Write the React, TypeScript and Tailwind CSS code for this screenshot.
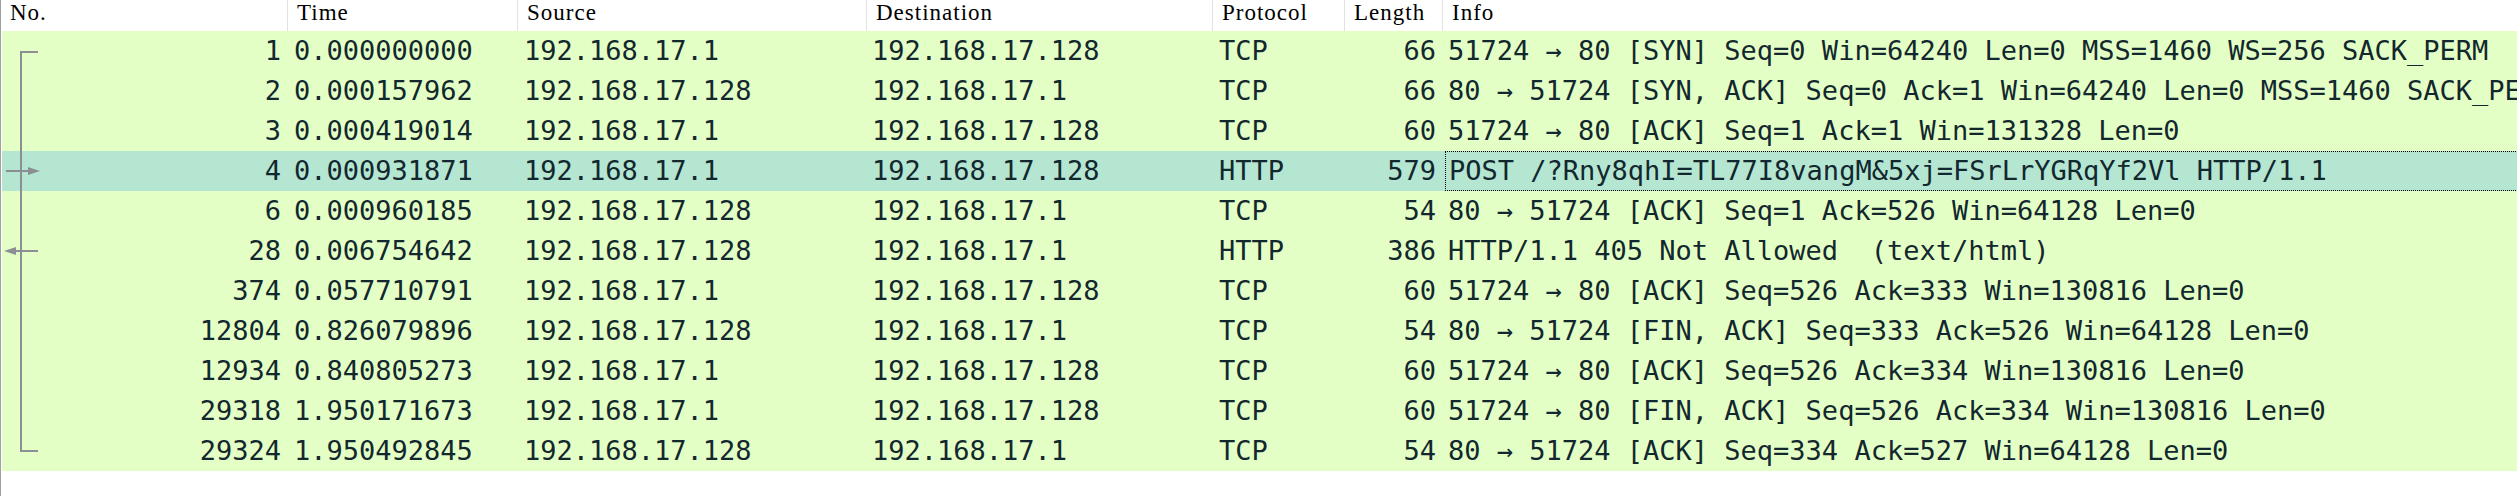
import React from 'react';

type Mark = 'start' | 'line' | 'to' | 'from' | 'end';

interface Packet {
	no: string;
	time: string;
	src: string;
	dst: string;
	proto: string;
	len: string;
	info: string;
	mark: Mark;
}

const packets: Packet[] = [
	{ no: '1', time: '0.000000000', src: '192.168.17.1', dst: '192.168.17.128', proto: 'TCP', len: '66', info: '51724 → 80 [SYN] Seq=0 Win=64240 Len=0 MSS=1460 WS=256 SACK_PERM', mark: 'start' },
	{ no: '2', time: '0.000157962', src: '192.168.17.128', dst: '192.168.17.1', proto: 'TCP', len: '66', info: '80 → 51724 [SYN, ACK] Seq=0 Ack=1 Win=64240 Len=0 MSS=1460 SACK_PERM', mark: 'line' },
	{ no: '3', time: '0.000419014', src: '192.168.17.1', dst: '192.168.17.128', proto: 'TCP', len: '60', info: '51724 → 80 [ACK] Seq=1 Ack=1 Win=131328 Len=0', mark: 'line' },
	{ no: '4', time: '0.000931871', src: '192.168.17.1', dst: '192.168.17.128', proto: 'HTTP', len: '579', info: 'POST /?Rny8qhI=TL77I8vangM&5xj=FSrLrYGRqYf2Vl HTTP/1.1', mark: 'to' },
	{ no: '6', time: '0.000960185', src: '192.168.17.128', dst: '192.168.17.1', proto: 'TCP', len: '54', info: '80 → 51724 [ACK] Seq=1 Ack=526 Win=64128 Len=0', mark: 'line' },
	{ no: '28', time: '0.006754642', src: '192.168.17.128', dst: '192.168.17.1', proto: 'HTTP', len: '386', info: 'HTTP/1.1 405 Not Allowed  (text/html)', mark: 'from' },
	{ no: '374', time: '0.057710791', src: '192.168.17.1', dst: '192.168.17.128', proto: 'TCP', len: '60', info: '51724 → 80 [ACK] Seq=526 Ack=333 Win=130816 Len=0', mark: 'line' },
	{ no: '12804', time: '0.826079896', src: '192.168.17.128', dst: '192.168.17.1', proto: 'TCP', len: '54', info: '80 → 51724 [FIN, ACK] Seq=333 Ack=526 Win=64128 Len=0', mark: 'line' },
	{ no: '12934', time: '0.840805273', src: '192.168.17.1', dst: '192.168.17.128', proto: 'TCP', len: '60', info: '51724 → 80 [ACK] Seq=526 Ack=334 Win=130816 Len=0', mark: 'line' },
	{ no: '29318', time: '1.950171673', src: '192.168.17.1', dst: '192.168.17.128', proto: 'TCP', len: '60', info: '51724 → 80 [FIN, ACK] Seq=526 Ack=334 Win=130816 Len=0', mark: 'line' },
	{ no: '29324', time: '1.950492845', src: '192.168.17.128', dst: '192.168.17.1', proto: 'TCP', len: '54', info: '80 → 51724 [ACK] Seq=334 Ack=527 Win=64128 Len=0', mark: 'end' },
];

const SELECTED = '4';

// conversation bracket drawn in the No. column
function TreeMark({ mark }: { mark: Mark }) {
	const c = '#8b8f94';
	return (
		<svg className="absolute left-0 top-0" width="44" height="40" viewBox="0 0 44 40">
			{mark === 'start' && (
				<>
					<rect x="18" y="20" width="2" height="20" fill={c} />
					<rect x="18" y="20" width="18" height="2" fill={c} />
				</>
			)}
			{mark === 'end' && (
				<>
					<rect x="18" y="0" width="2" height="21" fill={c} />
					<rect x="18" y="19" width="18" height="2" fill={c} />
				</>
			)}
			{(mark === 'line' || mark === 'to' || mark === 'from') && (
				<rect x="18" y="0" width="2" height="40" fill={c} />
			)}
			{mark === 'to' && (
				<>
					<rect x="4" y="19" width="24" height="2" fill={c} />
					<polygon points="26,16 38,20 26,24" fill={c} />
				</>
			)}
			{mark === 'from' && (
				<>
					<rect x="12" y="19" width="24" height="2" fill={c} />
					<polygon points="2,20 14,16 14,24" fill={c} />
				</>
			)}
		</svg>
	);
}

export default function App() {
	const headers = ['No.', 'Time', 'Source', 'Destination', 'Protocol', 'Length', 'Info'];

	return (
		<div className="w-full h-[496px] bg-white border-l border-[#a0a0a0] overflow-hidden">
			{/* Column header */}
			<div className="grid grid-cols-[286px_230px_349px_346px_132px_98px_1200px] h-[31px] bg-white">
				{headers.map((h, i) => (
					<div
						key={h}
						className={
							'pl-[9px] pt-[1px] text-[23px] leading-[23px] tracking-[1px] text-black whitespace-nowrap ' +
							(i > 0 ? 'border-l border-[#e2e2e2]' : '')
						}
						style={{ fontFamily: '"Liberation Serif", serif' }}
					>
						{h}
					</div>
				))}
			</div>

			{/* Packet rows */}
			<div
				className="border-l border-white text-[27px] leading-[40px] text-[#12272e]"
				style={{ fontFamily: '"DejaVu Sans Mono", monospace' }}
			>
				{packets.map((p) => {
					const sel = p.no === SELECTED;
					return (
						<div
							key={p.no}
							className={
								'grid grid-cols-[285px_230px_349px_346px_132px_98px_1200px] h-10 whitespace-pre ' +
								(sel ? 'bg-[#b5e6d2]' : 'bg-[#e4ffc5]')
							}
						>
							<div className="relative text-right pr-[6px]">
								<TreeMark mark={p.mark} />
								{p.no}
							</div>
							<div className="pl-[7px]">{p.time}</div>
							<div className="pl-[7px]">{p.src}</div>
							<div className="pl-[6px]">{p.dst}</div>
							<div className="pl-[7px]">{p.proto}</div>
							<div className="text-right pr-[6px]">{p.len}</div>
							{sel ? (
								<div className="pl-[3px]">
									<div className="h-10 border border-dotted border-black pl-[3px] leading-[38px]">{p.info}</div>
								</div>
							) : (
								<div className="pl-[6px]">{p.info}</div>
							)}
						</div>
					);
				})}
			</div>
		</div>
	);
}
